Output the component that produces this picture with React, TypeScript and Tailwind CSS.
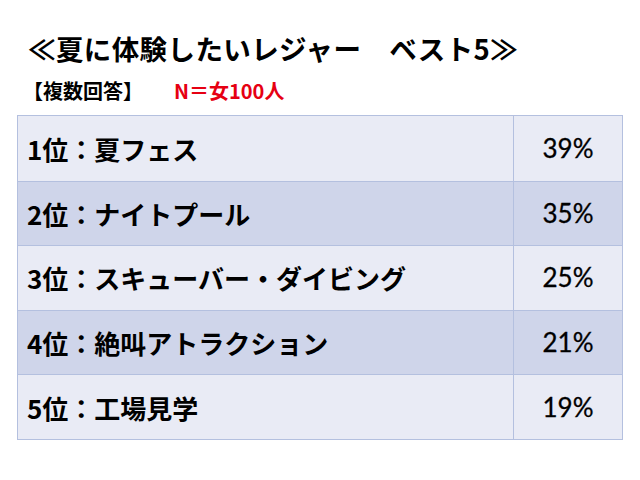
import React from 'react';

const rows = [
  { label: '1位：夏フェス', pct: '39%' },
  { label: '2位：ナイトプール', pct: '35%' },
  { label: '3位：スキューバー・ダイビング', pct: '25%' },
  { label: '4位：絶叫アトラクション', pct: '21%' },
  { label: '5位：工場見学', pct: '19%' },
];

const jp = { fontFamily: '"Noto Sans CJK JP", "Noto Sans", sans-serif' };

const App: React.FC = () => {
  return (
    <div className="w-[640px] h-[480px] bg-white overflow-hidden" style={jp}>
      <div className="pt-[29px] pl-[28px]">
        <h1 className="text-[27.5px] leading-[38px] font-bold text-black tracking-[0.4px]">
          ≪夏に体験したいレジャー　ベスト5≫
        </h1>
        <div className="flex items-center mt-[11px] text-[20px] leading-[26px] font-bold">
          <span className="text-black -ml-[5px]">【複数回答】</span>
          <span className="text-[#e60012] ml-[31px]">N＝女100人</span>
        </div>
      </div>
      <div className="mx-[17px] mt-[11px] w-[606px] border border-[#b4c0df]">
        {rows.map((r, i) => (
          <div
            key={i}
            className={`flex h-[64.6px] ${i > 0 ? 'border-t border-[#b4c0df]' : ''} ${
              i % 2 === 0 ? 'bg-[#e9ebf5]' : 'bg-[#cfd5ea]'
            }`}
          >
            <div className="flex-1 flex items-center pl-[9px] text-[26px] font-bold text-black">
              {r.label}
            </div>
            <div
              className="w-[109px] border-l border-[#b4c0df] flex items-center justify-center text-[26px] text-black [-webkit-text-stroke:0.3px_black]"
              style={{ fontFamily: 'Lato, "Noto Sans", sans-serif' }}
            >
              {r.pct}
            </div>
          </div>
        ))}
      </div>
    </div>
  );
};

export default App;
